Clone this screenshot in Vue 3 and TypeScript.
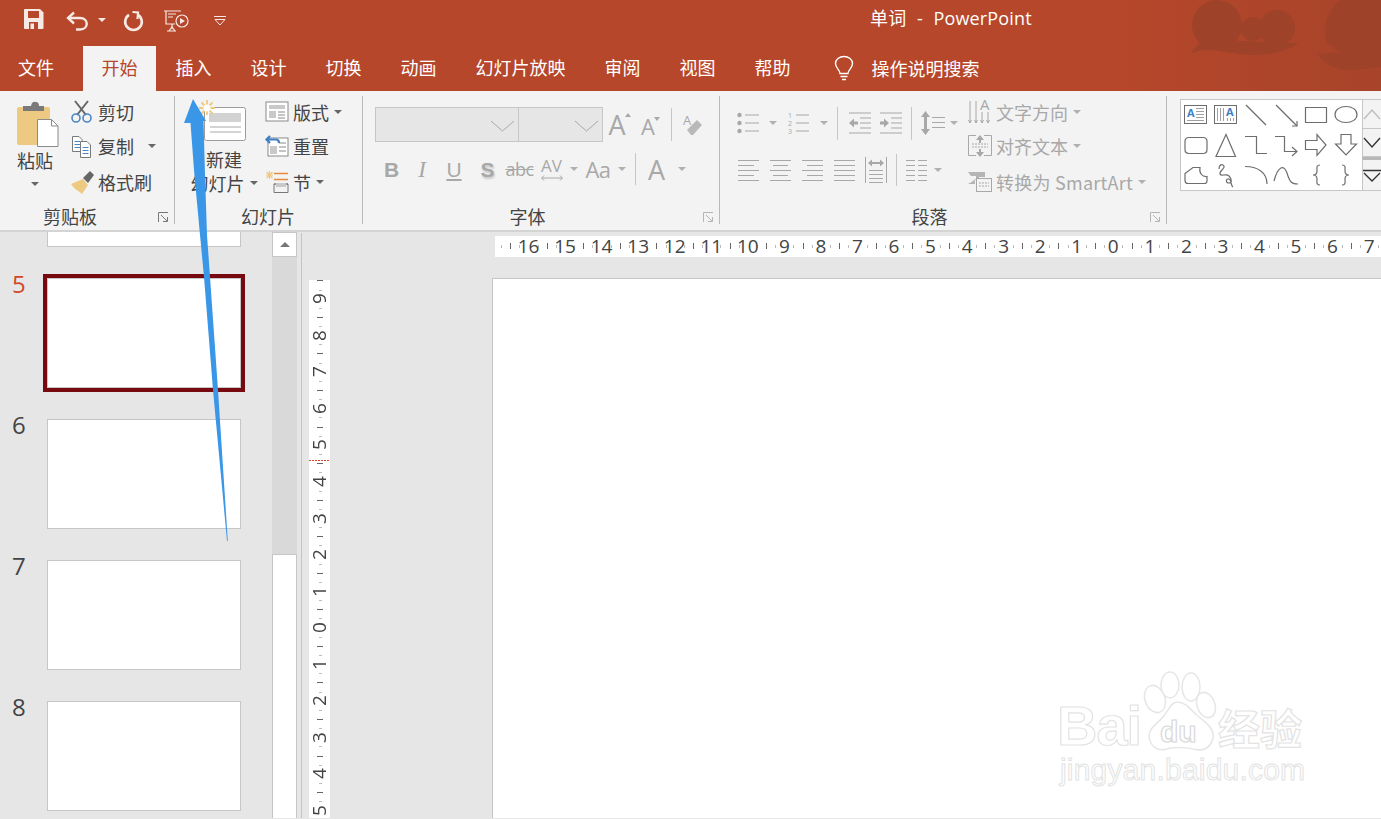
<script setup lang="ts">
const tabs = ['文件', '开始', '插入', '设计', '切换', '动画', '幻灯片放映', '审阅', '视图', '帮助']
const hLabels = ['', '16', '15', '14', '13', '12', '11', '10', '9', '8', '7', '6', '5', '4', '3', '2', '1', '0', '1', '2', '3', '4', '5', '6', '7', '']
const vLabels = ['9', '8', '7', '6', '5', '4', '3', '2', '1', '0', '1', '2', '3', '4', '5']
const thumbs = [6, 7, 8]

interface Shape { d: string; head?: string }
const shapes: Shape[] = [
  { d: '' },
  { d: '' },
  { d: 'M5 5L25 25' },
  { d: 'M5 5L26 26', head: 'M21 26H26V21' },
  { d: 'M4.5 7.5H25.5V22.5H4.5Z' },
  { d: 'M4 14.5C4 9.5 9 6.5 15 6.5S26 9.5 26 14.5 21 22.5 15 22.5 4 19.5 4 14.5Z' },
  { d: 'M8 7.5H22Q26 7.5 26 11.5V19.5Q26 23.5 22 23.5H8Q4 23.5 4 19.5V11.5Q4 7.5 8 7.5Z' },
  { d: 'M15 4.5L24.5 26.5H5Z' },
  { d: 'M4 6.5H15.5V23.5H26' },
  { d: 'M4 6.5H13.5V21.5H26', head: 'M21 17L26 21.5 21 26' },
  { d: 'M4.5 10.5H16V4.5L25 15 16 25.5V19.5H4.5Z' },
  { d: 'M10 4.5H20V14H25.5L15 25 4.5 14H10Z' },
  { d: 'M4 13.5L12 7.5H19C18 13 21 17 26 16.5V21Q26 23.5 23.5 23.5H7Q4 23.5 4 20.5Z' },
  { d: 'M8 9C8 5 11 3 13 6 14 9 8 11 9 14 10 17 15 13 18 16 21 19 21 23 18 23 14 23 15 18 18 19 21 20 19 25 22 27' },
  { d: 'M4 6.5C16 6.5 26 12 26 24' },
  { d: 'M3 21C7 6 13 4 16 13 19 23 21 24 27 24' },
  { d: 'M19 5C15 5 16 8 16 11 16 14 14 15 12 15 14 15 16 16 16 19 16 22 15 25 19 25' },
  { d: 'M11 5C15 5 14 8 14 11 14 14 16 15 18 15 16 15 14 16 14 19 14 22 15 25 11 25' }
]
</script>

<template>
  <div class="app">
    <header class="head">
      <svg class="blobs" viewBox="1090 0 291 91" width="291" height="91">
        <defs>
          <linearGradient id="fade" x1="0" x2="1" y1="0" y2="0">
            <stop offset="0" stop-color="#a8442a" stop-opacity="0" />
            <stop offset="1" stop-color="#a8442a" stop-opacity="1" />
          </linearGradient>
        </defs>
        <rect x="1090" y="0" width="291" height="91" fill="url(#fade)" />
        <g fill="#9e4329" class="soft">
          <circle cx="1217" cy="25" r="25" />
          <circle cx="1253" cy="29" r="12" />
          <circle cx="1277" cy="28" r="18" />
          <path d="M1191 54C1196 44 1203 40 1215 40L1298 43C1290 50 1272 56 1250 55 1228 54 1205 45 1191 54Z" />
          <path d="M1381 0H1340C1328 10 1322 25 1326 40 1330 48 1338 50 1340 52L1318 54C1322 65 1340 71 1355 70L1381 67Z" />
        </g>
      </svg>
      <div class="titlebar">
        <div class="qat">
          <svg class="q-save" width="20" height="20" viewBox="0 0 20 20">
            <path fill="#f6e9e5" d="M0 1Q0 0 1 0H16L19.5 3.5V19Q19.5 20 18.500 20H1Q0 20 0 19Z" />
            <path fill="#b7472a" d="M4 2H15V9H4ZM5 13H14V20H5Z" />
            <path fill="#f6e9e5" d="M6.500 14.500H10V20H6.500Z" />
          </svg>
          <svg class="q-undo" width="23" height="20" viewBox="0 0 23 20" fill="none" stroke="#f6e9e5" stroke-width="2.400">
            <path d="M8 1.500L2 7 8 12.500" />
            <path d="M2.500 7H14C23 7 23 18.500 14 18.500H10" />
          </svg>
          <i class="caret white q-caret"></i>
          <svg class="q-redo" width="20" height="20" viewBox="0 0 20 20" fill="none" stroke="#f6e9e5" stroke-width="2.600">
            <path d="M6 3.800A8.300 8.300 0 1 0 15 3.800" />
            <path d="M9.500 1L15 1.500 14.500 8" stroke-width="2.200" />
          </svg>
          <svg class="q-show" width="25" height="22" viewBox="0 0 25 22" fill="none" stroke="#f6e9e5" stroke-width="1.200">
            <path d="M0 1H17M2 1V14H11M4 4H12M4 7H9M8 14V19M3 21H12" />
            <path d="M5 21L8 17 11 21" />
            <circle cx="18" cy="11" r="6" />
            <path fill="#f6e9e5" stroke="none" d="M16 8L21 11 16 14Z" />
          </svg>
          <svg class="q-more" width="12" height="10" viewBox="0 0 12 10" fill="none" stroke="#f6e9e5">
            <path d="M0 .5H12M1 3.500H11L6 9Z" />
          </svg>
        </div>
        <div class="title">单词&nbsp; -&nbsp; PowerPoint</div>
      </div>
      <nav class="tabs">
        <div v-for="(t, i) in tabs" :key="i" class="tab" :class="{ first: i === 0, active: i === 1 }">{{ t }}</div>
        <div class="search">
          <svg width="20" height="25" viewBox="0 0 20 25" fill="none" stroke="#fff" stroke-width="1.400">
            <path d="M6 17.500C6 13.500 1.500 12.500 1.500 7.500A8.500 7 0 0 1 18.500 7.500C18.500 12.500 14 13.500 14 17.500Z" />
            <path d="M6.500 20.500H13.500M8 23.500H12" />
          </svg>
          <span>操作说明搜索</span>
        </div>
      </nav>
    </header>

    <section class="ribbon">
      <div class="group g-clip">
        <div class="g-body">
          <div class="bigcol paste">
            <svg width="42" height="46" viewBox="0 0 42 46">
              <rect x="0" y="6" width="33" height="38" rx="2" fill="#eec982" />
              <path fill="#7a7a7a" d="M6 9V5H14Q15 0 19 1 22 1 22 5H27V10H6Z" />
              <path fill="#fff" stroke="#8a8a8a" d="M20.500 18.500H34.500L41 25V45.500H20.500Z" />
              <path fill="none" stroke="#8a8a8a" d="M34.500 18.500V25H41" />
            </svg>
            <span class="t paste-t">粘贴</span>
            <i class="caret below"></i>
          </div>
          <div class="list">
            <div class="item">
              <svg width="24" height="24" viewBox="0 0 24 24" fill="none">
                <path d="M5 1L16 15M18 1L7 15" stroke="#666" stroke-width="2" />
                <circle cx="6" cy="18" r="4" stroke="#4c86c6" stroke-width="1.600" />
                <circle cx="17" cy="18" r="4" stroke="#4c86c6" stroke-width="1.600" />
              </svg>
              <span class="t">剪切</span>
            </div>
            <div class="item">
              <svg width="24" height="24" viewBox="0 0 24 24" fill="none" stroke="#7a7a7a">
                <path fill="#fff" d="M2.500 2.500H9L12 5.500V17.500H2.500Z" />
                <path stroke="#4c86c6" d="M4.500 7.500H10M4.500 10.500H10M4.500 13.500H10" />
                <path fill="#fff" d="M10.500 7.500H17L20.500 11V23.500H10.500Z" />
                <path stroke="#4c86c6" d="M12.500 13.500H18.500M12.500 16.500H18.500M12.500 19.500H18.500" />
              </svg>
              <span class="t">复制</span>
              <i class="caret copy-caret"></i>
            </div>
            <div class="item last">
              <svg width="24" height="24" viewBox="0 0 24 24">
                <path fill="#eec982" d="M1 14L13 9 18 15 12 24C9 21 5 20 1 14Z" />
                <path fill="#666" d="M13 8L20 1 24 5 18 13Z" />
              </svg>
              <span class="t">格式刷</span>
            </div>
          </div>
        </div>
        <div class="g-label">剪贴板</div>
        <svg class="launch" width="11" height="11" viewBox="0 0 11 11" fill="none" stroke="#777">
          <path d="M.500 10V.500H10M3 3L9 9M5 9.500H9.500V5" />
        </svg>
      </div>

      <div class="group g-slide">
        <div class="g-body">
          <div class="bigcol newslide">
            <svg width="47" height="42" viewBox="0 0 47 42">
              <rect x="5.500" y="7.500" width="41" height="33" rx="2" fill="#fff" stroke="#9a9a9a" />
              <rect x="10" y="13" width="32" height="9" fill="#d2d2d2" />
              <path stroke="#a8a8a8" d="M11 27H42M11 32H42" />
              <g stroke="#eec982" stroke-width="1.800">
                <path d="M8 0V15M0 8H16M2.500 2.500L13.500 13.500M13.500 2.500L2.500 13.500" />
              </g>
              <circle cx="8" cy="8" r="3.500" fill="#fff" />
            </svg>
            <span class="t new-t">新建</span>
            <span class="t-row"><span class="t">幻灯片</span><i class="caret"></i></span>
          </div>
          <div class="list">
            <div class="item">
              <svg width="24" height="22" viewBox="0 0 24 22" fill="none">
                <rect x="1" y="1" width="22" height="19" fill="#fff" stroke="#8a8a8a" />
                <path fill="#c9c9c9" d="M4 4H20V8H4ZM4 10H11V17H4Z" />
                <path stroke="#8a8a8a" d="M13 11H20M13 14H20M13 17H20" />
              </svg>
              <span class="t">版式</span><i class="caret"></i>
            </div>
            <div class="item">
              <svg width="24" height="22" viewBox="0 0 24 22" fill="none">
                <rect x="3" y="3" width="20" height="18" fill="#fff" stroke="#8a8a8a" />
                <path fill="#c9c9c9" d="M5 11H12V19H5Z" />
                <path stroke="#8a8a8a" d="M14 8H21M14 12H21M14 16H21" />
                <path stroke="#3f7fc4" stroke-width="2.200" d="M5 1L1.500 4.500 5 8M2 4.500H11Q14 4.500 14 8" />
              </svg>
              <span class="t">重置</span>
            </div>
            <div class="item last">
              <svg width="24" height="22" viewBox="0 0 24 22" fill="none">
                <g stroke="#eec982" stroke-width="1.200"><path d="M4.500 0V8M1 4H8M1.500 1L7.500 7M7.500 1L1.500 7" /></g>
                <path stroke="#e88a3a" stroke-width="1.400" d="M9 2.500H23M9 8.500H23" />
                <path stroke="#777" d="M9 13V21.500H23V13ZM9 13H23" />
                <path fill="#c9c9c9" d="M11 12H21V16H11Z" />
              </svg>
              <span class="t">节</span><i class="caret"></i>
            </div>
          </div>
        </div>
        <div class="g-label">幻灯片</div>
      </div>

      <div class="group g-font">
        <div class="g-body dis">
          <div class="f-row1">
            <div class="combo c1"><svg width="25" height="12" viewBox="0 0 25 12" fill="none" stroke="#a8a8a8"><path d="M1 1L12.500 11 24 1" /></svg></div>
            <div class="combo c2"><svg width="25" height="12" viewBox="0 0 25 12" fill="none" stroke="#a8a8a8"><path d="M1 1L12.500 11 24 1" /></svg></div>
            <span class="fc a-big">A<i class="tri up"></i></span>
            <span class="fc a-small">A<i class="tri"></i></span>
            <i class="vsep"></i>
            <span class="fc">
              <svg width="20" height="22" viewBox="0 0 20 22">
                <text x="0" y="11" font-size="13" fill="#a8a8a8" font-family="Open Sans">A</text>
                <path fill="#b9b9b9" d="M4 16L14 6 19 11 10 21H8Z" />
              </svg>
            </span>
          </div>
          <div class="f-row2">
            <span class="fc fb">B</span>
            <span class="fc fi">I</span>
            <span class="fc fu">U</span>
            <span class="fc fs">S</span>
            <span class="fc fabc">abc</span>
            <span class="fc fav"><span>AV</span><svg width="22" height="6" viewBox="0 0 22 6" fill="none" stroke="#a8a8a8"><path d="M3 .5L.5 3 3 5.500M19 .5L21.500 3 19 5.500M1 3H21" /></svg></span>
            <i class="caret d"></i>
            <span class="fc faa">Aa</span>
            <i class="caret d"></i>
            <i class="vsep tall"></i>
            <span class="fc fa">A</span>
            <i class="caret d"></i>
          </div>
        </div>
        <div class="g-label">字体</div>
        <svg class="launch" width="11" height="11" viewBox="0 0 11 11" fill="none" stroke="#b5b5b5">
          <path d="M.500 10V.500H10M3 3L9 9M5 9.500H9.500V5" />
        </svg>
      </div>

      <div class="group g-para">
        <div class="g-body dis para-body">
          <div class="p-left">
            <div class="p-row1">
              <span class="pc"><svg width="22" height="20" viewBox="0 0 22 20" fill="#a8a8a8" stroke="none"><circle cx="2.500" cy="2" r="2.200" /><circle cx="2.500" cy="10" r="2.200" /><circle cx="2.500" cy="18" r="2.200" /><path d="M8 1.500H22V2.500H8ZM8 9.500H22V10.500H8ZM8 17.500H22V18.500H8Z" /></svg></span>
              <i class="caret d"></i>
              <span class="pc"><svg width="22" height="22" viewBox="0 0 22 22" fill="#a8a8a8"><text x="0" y="6" font-size="7" font-family="Open Sans">1</text><text x="0" y="14" font-size="7" font-family="Open Sans">2</text><text x="0" y="22" font-size="7" font-family="Open Sans">3</text><path d="M8 2.500H21V3.500H8ZM8 10.500H21V11.500H8ZM8 18.500H21V19.500H8Z" /></svg></span>
              <i class="caret d"></i>
              <i class="vsep"></i>
              <span class="pc"><svg width="22" height="22" viewBox="0 0 22 22" fill="#a8a8a8"><path d="M0 .5H22V1.500H0ZM11 5.500H22V6.500H11ZM11 10.500H22V11.500H11ZM11 15.500H22V16.500H11ZM0 20.500H22V21.500H0ZM0 11L5 6.500V9.500H9V12.500H5V15.500Z" /></svg></span>
              <span class="pc"><svg width="22" height="22" viewBox="0 0 22 22" fill="#a8a8a8"><path d="M0 .5H22V1.500H0ZM11 5.500H22V6.500H11ZM11 10.500H22V11.500H11ZM11 15.500H22V16.500H11ZM0 20.500H22V21.500H0ZM9 11L4 6.500V9.500H0V12.500H4V15.500Z" /></svg></span>
              <i class="vsep"></i>
              <span class="pc"><svg width="24" height="24" viewBox="0 0 24 24" fill="#a8a8a8"><path d="M4.500 0L9 6H6V18H9L4.500 24 0 18H3V6H0ZM11 6H24V7H11ZM11 11H24V12H11ZM11 16H24V17H11Z" /></svg></span>
              <i class="caret d"></i>
            </div>
            <div class="p-row2">
              <span class="pc"><svg width="21" height="22" viewBox="0 0 21 22" fill="#a8a8a8"><path d="M0 1H21V2H0ZM0 6H16V7H0ZM0 11H21V12H0ZM0 16H16V17H0ZM0 21H21V22H0Z" /></svg></span>
              <span class="pc"><svg width="21" height="22" viewBox="0 0 21 22" fill="#a8a8a8"><path d="M0 1H21V2H0ZM3 6H18V7H3ZM0 11H21V12H0ZM3 16H18V17H3ZM0 21H21V22H0Z" /></svg></span>
              <span class="pc"><svg width="21" height="22" viewBox="0 0 21 22" fill="#a8a8a8"><path d="M0 1H21V2H0ZM5 6H21V7H5ZM0 11H21V12H0ZM5 16H21V17H5ZM0 21H21V22H0Z" /></svg></span>
              <span class="pc"><svg width="21" height="22" viewBox="0 0 21 22" fill="#a8a8a8"><path d="M0 1H21V2H0ZM0 6H21V7H0ZM0 11H21V12H0ZM0 16H21V17H0ZM0 21H21V22H0Z" /></svg></span>
              <span class="pc"><svg width="22" height="26" viewBox="0 0 22 26" fill="#a8a8a8"><path d="M0 0H1V26H0ZM21 0H22V26H21ZM4 13H18V14H4ZM4 17H18V18H4ZM4 21H18V22H4ZM4 25H18V26H4ZM3 6L7 2.500V5H15V2.500L19 6 15 9.500V7H7V9.500Z" /></svg></span>
              <i class="vsep tall"></i>
              <span class="pc"><svg width="21" height="22" viewBox="0 0 21 22" fill="#a8a8a8"><path d="M0 1H9V2H0ZM12 1H21V2H12ZM0 6H9V7H0ZM12 6H21V7H12ZM0 11H9V12H0ZM12 11H21V12H12ZM0 16H9V17H0ZM12 16H21V17H12ZM0 21H9V22H0ZM12 21H21V22H12Z" /></svg></span>
              <i class="caret d"></i>
            </div>
          </div>
          <div class="list p-list">
            <div class="item">
              <svg width="24" height="26" viewBox="0 0 24 26" fill="none" stroke="#a8a8a8">
                <path d="M2 2V24M.5 21L2 24 3.500 21M8 2V24M6.500 21L8 24 9.500 21M14 13V24M12.500 21L14 24 15.500 21M20 13V24M18.500 21L20 24 21.500 21" />
                <text x="12" y="11" font-size="15" fill="#a8a8a8" stroke="none" font-family="Open Sans">A</text>
              </svg>
              <span class="t">文字方向</span><i class="caret d"></i>
            </div>
            <div class="item">
              <svg width="24" height="24" viewBox="0 0 24 24" fill="none" stroke="#a8a8a8">
                <path d="M8 1.500H.5V21.500H8M16 1.500H23.500V21.500H16" />
                <path stroke-dasharray="2 1" d="M4 10H20M4 13H20" />
                <path fill="#a8a8a8" stroke="none" d="M12 1L16 6H13V9H11V6H8ZM12 23L16 18H13V15H11V18H8Z" />
              </svg>
              <span class="t">对齐文本</span><i class="caret d"></i>
            </div>
            <div class="item last">
              <svg width="24" height="20" viewBox="0 0 24 20" fill="none">
                <path fill="#b5b5b5" d="M0 0H17V5H11V7L3 9 8 7V4H3ZM0 12L7 8V12Z" />
                <rect x="8.500" y="6.500" width="15" height="13" fill="#f3f3f3" stroke="#a8a8a8" />
                <path stroke="#a8a8a8" d="M11 11H21M11 14H21" stroke-dasharray="2 1" />
              </svg>
              <span class="t sa">转换为 SmartArt</span><i class="caret d"></i>
            </div>
          </div>
        </div>
        <div class="g-label">段落</div>
        <svg class="launch" width="11" height="11" viewBox="0 0 11 11" fill="none" stroke="#b5b5b5">
          <path d="M.500 10V.500H10M3 3L9 9M5 9.500H9.500V5" />
        </svg>
      </div>

      <div class="group g-shape">
        <div class="gallery">
          <div class="shapes">
            <div v-for="(s, i) in shapes" :key="i" class="shape">
              <svg width="30" height="30" viewBox="0 0 30 30" fill="none" stroke="#6e6e6e" stroke-width="1.200">
                <template v-if="i === 0">
                  <rect x="3.500" y="5.500" width="22" height="18" stroke-width="1" fill="#fff" />
                  <text x="6" y="17" font-size="11" font-weight="700" fill="#3f7fc4" stroke="none" font-family="Open Sans">A</text>
                  <path stroke="#a0a0a0" stroke-width="1" d="M15 8.500H23M15 11.500H23M15 14.500H23M15 17.500H23M6 20.500H23" />
                </template>
                <template v-else-if="i === 1">
                  <rect x="3.500" y="5.500" width="22" height="18" stroke-width="1" fill="#fff" />
                  <path stroke="#a0a0a0" stroke-width="1" d="M6.500 8V21M9.500 8V21M12.500 8V21" />
                  <text x="15" y="16" font-size="11" font-weight="700" fill="#3f7fc4" stroke="none" font-family="Open Sans">A</text>
                  <path stroke="#a0a0a0" stroke-width="1" d="M16.500 18V21M19.500 18V21M22.500 18V21" />
                </template>
                <template v-else>
                  <path :d="s.d" />
                  <path v-if="s.head" :d="s.head" />
                </template>
              </svg>
            </div>
          </div>
        </div>
        <div class="scroller">
          <div class="sbtn off"><svg width="18" height="10" viewBox="0 0 18 10" fill="none" stroke="#bdbdbd" stroke-width="1.400"><path d="M1 10L9 1 17 10" /></svg></div>
          <div class="sbtn"><svg width="18" height="10" viewBox="0 0 18 10" fill="none" stroke="#333" stroke-width="1.400"><path d="M1 0L9 9 17 0" /></svg></div>
          <div class="sbtn more"><svg width="18" height="12" viewBox="0 0 18 12" fill="none" stroke="#333" stroke-width="1.400"><path d="M0 .5H18M1 3L9 11 17 3" /></svg></div>
        </div>
      </div>
    </section>

    <main class="body">
      <aside class="side">
        <div class="thumb-row cut"><span class="num"></span><div class="thumb"></div></div>
        <div class="thumb-row cur"><span class="num">5</span><div class="thumb"></div></div>
        <div v-for="n in thumbs" :key="n" class="thumb-row"><span class="num">{{ n }}</span><div class="thumb"></div></div>
      </aside>
      <div class="vbar">
        <div class="vbtn"><i class="uptri"></i></div>
        <div class="vtrack"></div>
        <div class="vthumb"></div>
      </div>
      <div class="work">
        <div class="hruler">
          <div class="hrack">
            <span v-for="(l, i) in hLabels" :key="i" class="hcell">{{ l }}</span>
          </div>
        </div>
        <div class="work-row">
          <div class="vruler">
            <span v-for="(l, i) in vLabels" :key="i" class="vcell"><b>{{ l }}</b></span>
            <i class="marker"></i>
          </div>
          <div class="slide">
            <div class="mark">
              <span class="m-bai">Bai</span>
              <svg class="m-paw" width="78" height="82" viewBox="0 0 78 82" fill="#fff" stroke="#e6e6e6" stroke-width="1.500">
                <ellipse cx="12" cy="27" rx="10" ry="14" transform="rotate(-20 12 27)" />
                <ellipse cx="27" cy="13" rx="9" ry="13" />
                <ellipse cx="48" cy="15" rx="9" ry="14" />
                <ellipse cx="63" cy="33" rx="9" ry="13" transform="rotate(-20 63 33)" />
                <path d="M34 30C44 30 48 39 56 45 64 51 72 58 70 66 67 78 58 79 50 77 43 75 30 75 24 77 14 80 7 74 6 64 6 56 14 52 20 45 26 38 28 30 34 30Z" />
              </svg>
              <span class="m-du">du</span>
              <span class="m-cn">经验</span>
              <span class="m-url">jingyan.baidu.com</span>
            </div>
          </div>
        </div>
      </div>
    </main>

    <svg class="arrow" width="1381" height="819" viewBox="0 0 1381 819">
      <path fill="#3a96e6" d="M193 99L206 121 203.500 121 205 175 207 235 210 277 218 390 227.800 541H227L213 390 204 277 200 235 194 170 190.500 123 184 123Z" />
    </svg>
  </div>
</template>

<style scoped>
.app {
  position: relative;
  width: 1381px;
  height: 819px;
  overflow: hidden;
  background: #e6e6e6;
  font-family: "Noto Sans CJK SC", "Noto Sans", sans-serif;
  font-size: 18px;
  color: #444;
}
.app svg { overflow: visible; }
.head { position: relative; background: #b7472a; height: 91px; }
.blobs { position: absolute; right: 0; top: 0; overflow: hidden !important; }
.soft { filter: blur(.7px); }
.titlebar { position: relative; display: flex; align-items: flex-start; height: 46px; }
.qat { position: relative; width: 870px; height: 46px; display: flex; align-items: flex-start; }
.q-save { margin: 9px 0 0 24px; }
.q-undo { margin: 11px 0 0 22px; }
.q-caret { margin: 18px 0 0 9px; }
.q-redo { margin: 11px 0 0 17px; }
.q-show { margin: 10px 0 0 21px; }
.q-more { margin: 16px 0 0 25px; }
.title {
  color: #fff;
  line-height: 24px;
  margin-top: 6px;
  white-space: pre;
  word-spacing: .5px;
  letter-spacing: .15px;
  font-family: "Open Sans", "Noto Sans CJK SC", sans-serif;
}
.tabs { position: relative; display: flex; height: 45px; color: #fff; }
.tab { padding: 0 19.5px; line-height: 43px; white-space: nowrap; }
.tab.first { width: 83px; box-sizing: border-box; padding: 0 0 0 18px; }
.tab.active { background: #f3f3f3; color: #b7472a; width: 73px; box-sizing: border-box; padding: 0 18.5px; margin-right: 0; }
.search { display: flex; align-items: center; margin-left: 23.5px; gap: 18px; height: 44px; }
.caret {
  display: inline-block;
  width: 0;
  height: 0;
  flex: none;
  border-left: 4px solid transparent;
  border-right: 4px solid transparent;
  border-top: 4px solid #666;
}
.caret.white { border-top-color: #f6e9e5; }
.caret.d { border-top-color: #b0b0b0; }
.ribbon {
  display: flex;
  height: 139px;
  box-sizing: content-box;
  background: #f3f3f3;
  border-bottom: 2px solid #d4d4d4;
}
.group { position: relative; flex: none; display: flex; flex-direction: column; height: 139px; }
.group::after {
  content: "";
  position: absolute;
  right: 0;
  top: 5px;
  bottom: 6px;
  width: 1px;
  background: #b9b9b9;
}
.g-body { height: 113px; display: flex; }
.g-label { line-height: 24px; text-align: center; color: #444; }
.launch { position: absolute; right: 6px; bottom: 7px; }
.g-clip { width: 175px; }
.g-clip .g-label { padding-right: 35px; }
.g-slide { width: 188px; }
.g-slide .g-label { padding-right: 2px; }
.g-font { width: 357px; }
.g-font .g-label { padding-right: 28px; padding-left: 0; }
.g-para { width: 447px; }
.g-para .g-label { padding-right: 28px; }
.g-shape { flex: 1; display: flex; flex-direction: row; padding: 8px 0 0 13px; box-sizing: border-box; }
.g-shape::after { display: none; }
.t { white-space: nowrap; line-height: 24px; }
.sa { letter-spacing: .25px; }
.bigcol { display: flex; flex-direction: column; align-items: center; }
.paste { width: 54px; margin: 10px 8px 0; }
.paste svg { margin-left: 6px; flex: none; }
.paste-t { margin-top: 1px; }
.below { margin-top: 10px; }
.newslide { width: 78px; margin: 9px 2px 0 10px; }
.new-t { margin-top: 6px; line-height: 23px; }
.newslide svg { flex: none; margin-left: -3px; }
.t-row { display: flex; align-items: center; gap: 5px; }
.list { display: flex; flex-direction: column; padding-top: 4px; }
.item { display: flex; align-items: center; gap: 4px; height: 34px; }
.item svg { flex: none; }
.item .caret { margin-left: 1px; }
.item.last { margin-top: 2px; }
.item .copy-caret { margin-left: 10px; }
.dis { color: #a8a8a8; }
.dis .t { color: #a8a8a8; }
.f-row1 {
  display: grid;
  grid-template-columns: 144px 84px 28px 34px 12px 32px;
  height: 35px;
  margin: 16px 0 0 12px;
  align-items: center;
  justify-items: center;
}
.g-font .g-body { flex-direction: column; }
.combo {
  box-sizing: border-box;
  height: 35px;
  width: 100%;
  background: #e6e6e6;
  border: 1px solid #c6c6c6;
  display: flex;
  align-items: center;
  justify-content: flex-end;
  padding: 3px 3px 0 0;
}
.combo.c2 { border-left: 0; }
.fc { position: relative; display: inline-flex; flex-direction: column; align-items: center; font-family: "Open Sans", sans-serif; color: #a8a8a8; line-height: 1; }
.a-big { font-size: 27px; }
.a-small { font-size: 22px; margin-top: 3px; }
.tri {
  position: absolute;
  right: -5px;
  top: 2px;
  border-left: 3.500px solid transparent;
  border-right: 3.500px solid transparent;
  border-top: 4px solid #a8a8a8;
}
.tri.up { border-top: 0; border-bottom: 4px solid #a8a8a8; }
.vsep { display: block; width: 1px; height: 33px; background: #c6c6c6; }
.vsep.tall { height: 32px; }
.f-row2 {
  display: grid;
  grid-template-columns: 32px 29px 35px 32px 32px 32px 12px 37px 10px 18px 24px 26px;
  height: 36px;
  margin: 9px 0 0 0.500px;
  padding-left: 12px;
  align-items: center;
  justify-items: center;
}
.fb, .fi, .fu, .fs { font-size: 21px; font-family: "Liberation Sans", sans-serif; }
.fb { font-weight: 700; }
.fs { font-weight: 700; text-shadow: 1px 2px 2px #c8c8c8; }
.fi { font-family: "Liberation Serif", serif; font-style: italic; font-size: 23px; }
.fu { text-decoration: underline; text-underline-offset: 2px; }
.fabc { font-size: 18px; text-decoration: line-through; letter-spacing: -.5px; }
.fav { font-size: 17px; gap: 1px; }
.fav span { line-height: 16px; text-decoration: none; }
.faa { font-size: 22px; letter-spacing: -.5px; }
.fa { font-size: 27px; }
.para-body { display: flex; }
.p-left { width: 248px; box-sizing: border-box; }
.pc { display: flex; align-items: center; justify-content: center; }
.p-row1 {
  display: grid;
  grid-template-columns: 36px 14px 38px 12px 15px 29px 34px 7px 35px 8px;
  height: 36px;
  margin: 14px 0 0 10px;
  align-items: center;
  justify-items: center;
}
.p-row2 {
  display: grid;
  grid-template-columns: 32px 32px 32px 32px 32px 8px 33px 10px;
  height: 36px;
  margin: 11px 0 0 12px;
  align-items: center;
  justify-items: center;
}
.gallery {
  box-sizing: border-box;
  width: 182px;
  height: 92px;
  background: #fff;
  border: 1px solid #c6c6c6;
  border-right: 0;
}
.shapes { display: grid; grid-template-columns: repeat(6, 30px); grid-auto-rows: 30px; }
.shape { height: 30px; }
.shape svg { display: block; }
.scroller { flex: 1; display: flex; flex-direction: column; height: 92px; }
.sbtn {
  flex: 1;
  box-sizing: border-box;
  border: 1px solid #c6c6c6;
  border-right: 0;
  display: flex;
  align-items: center;
  justify-content: center;
  overflow: hidden;
  background: #f3f3f3;
}
.sbtn + .sbtn { border-top: 0; }
.sbtn.more { border-top: 3px solid #b8b8b8; padding-top: 2px; }
.body { display: flex; height: 586px; overflow: hidden; }
.side { width: 272px; flex: none; background: #e6e6e6; overflow: hidden; }
.thumb-row { display: flex; margin-bottom: 31px; }
.num {
  width: 47px;
  height: 0;
  box-sizing: border-box;
  padding-left: 12px;
  font: 24px/30px "Open Sans", sans-serif;
  color: #444;
  transform: translateY(-9px);
}
.thumb {
  box-sizing: border-box;
  width: 194px;
  height: 110px;
  background: #fff;
  border: 1px solid #c6c6c6;
}
.cut .thumb { height: 15px; border-top: 0; }
.cur .num { color: #d24726; }
.cur .thumb { box-shadow: 0 0 0 4px #770a10; }
.vbar {
  width: 25px;
  flex: none;
  box-sizing: border-box;
  display: flex;
  flex-direction: column;
  background: #d9d9d9;
}
.vbtn {
  height: 25px;
  background: #fff;
  border: 1px solid #c6c6c6;
  box-sizing: border-box;
  display: flex;
  align-items: center;
  justify-content: center;
}
.uptri {
  width: 0;
  height: 0;
  border-left: 5px solid transparent;
  border-right: 5px solid transparent;
  border-bottom: 5px solid #777;
}
.vtrack { height: 297px; }
.vthumb { flex: 1; background: #fff; border: 1px solid #c6c6c6; border-bottom: 0; }
.work {
  flex: 1;
  min-width: 0;
  margin-left: 4px;
  border-left: 1px solid #c4c4c4;
  margin-top: 1px;
  overflow: hidden;
}
.hruler {
  margin: 3px 0 0 193px;
  height: 21px;
  background: #fff;
}
.hrack { display: flex; margin-left: -21.300px; }
.hcell {
  flex: none;
  width: 36.560px;
  height: 21px;
  text-align: center;
  font: 19px/20px "Open Sans", sans-serif;
  color: #444;
  background:
    linear-gradient(#666, #666) 0 7px / 1px 6px no-repeat,
    linear-gradient(#bbb, #bbb) 9.140px 9px / 1px 3px no-repeat,
    linear-gradient(#bbb, #bbb) 27.420px 9px / 1px 3px no-repeat;
}
.hcell:first-child { background: linear-gradient(#bbb, #bbb) 27.420px 9px / 1px 3px no-repeat; }
.work-row { display: flex; margin-top: 22px; }
.vruler {
  position: relative;
  flex: none;
  margin: 1px 0 0 7px;
  width: 21px;
  height: 539px;
  background: #fff;
  padding-top: 0.400px;
  box-sizing: border-box;
}
.vcell {
  display: flex;
  align-items: center;
  justify-content: center;
  height: 36.560px;
  color: #444;
  background:
    linear-gradient(#666, #666) 8px 0 / 6px 1px no-repeat,
    linear-gradient(#bbb, #bbb) 9.500px 9.140px / 3px 1px no-repeat,
    linear-gradient(#bbb, #bbb) 9.500px 27.420px / 3px 1px no-repeat;
}
.vcell b {
  font: 400 19px/21px "Open Sans", sans-serif;
  writing-mode: vertical-rl;
  transform: rotate(180deg);
}
.marker {
  position: absolute;
  left: 0;
  right: 0;
  top: 180px;
  height: 1px;
  background: repeating-linear-gradient(90deg, #e0452a 0 2px, transparent 2px 3px);
}
.slide {
  position: relative;
  flex: none;
  margin: -1px 0 0 162px;
  width: 900px;
  height: 560px;
  box-sizing: border-box;
  background: #fff;
  border: 1px solid #c6c6c6;
}
.mark { position: absolute; left: 567px; top: 389px; width: 250px; height: 125px; }
.mark span { position: absolute; color: #fff; -webkit-text-stroke: 1.200px #e3e3e3; white-space: nowrap; line-height: 1; }
.m-bai { left: -3px; top: 30px; font: 700 56px/1 "Liberation Sans", sans-serif; letter-spacing: -1px; }
.m-paw { position: absolute; left: 83px; top: 4px; }
.m-du { left: 100px; top: 49px; font: 700 30px/1 "Liberation Sans", sans-serif; -webkit-text-stroke-color: #d8d8d8 !important; }
.m-cn { left: 158px; top: 38px; font: 700 42px/1 "Noto Sans CJK SC", sans-serif; }
.m-url { left: 0; top: 87px; font: 400 30px/1 "Liberation Sans", sans-serif; letter-spacing: .2px; -webkit-text-stroke-width: 1px !important; }
.arrow { position: absolute; left: 0; top: 0; pointer-events: none; }
</style>

<style>
html, body { margin: 0; overflow: hidden; }
</style>
